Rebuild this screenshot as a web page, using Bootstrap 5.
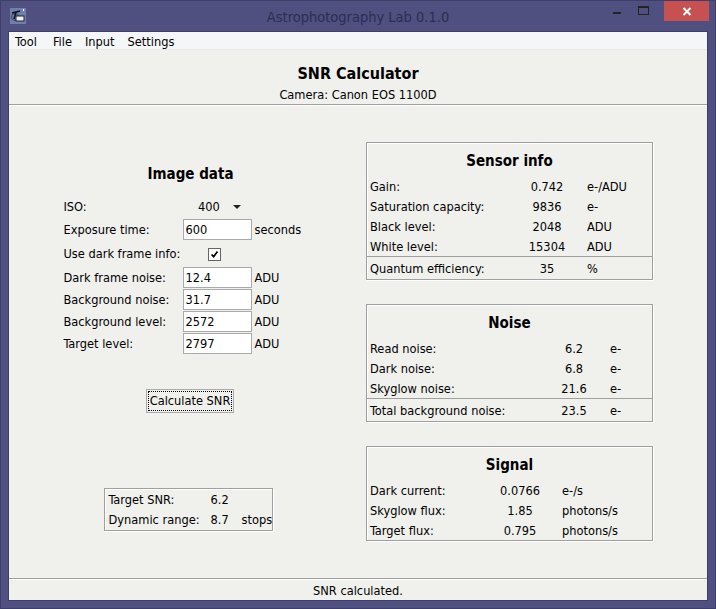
<!DOCTYPE html>
<html lang="en">
<head>
  <meta charset="UTF-8">
  <title>Astrophotography Lab 0.1.0</title>
  <link href="https://cdn.jsdelivr.net/npm/bootstrap@5.3.0/dist/css/bootstrap.min.css" rel="stylesheet">
  <style>
    html, body { height: 100%; }
    body { margin: 0; background: #4f5080; color: #000; font-family: "DejaVu Sans", sans-serif; font-stretch: condensed; font-size: 12.7px; line-height: 20px; overflow: hidden; }
    .app-frame { width: 716px; height: 609px; border: 1px solid #3d3e6a; }
    .title-bar { height: 30px; padding-left: 9px; }
    .title-text { left: 0; right: 0; top: 6px; text-align: center; color: #2d2d50; font-size: 14.5px; }
    .win-btns { right: 6px; top: 0; }
    .win-btn { width: 27px; height: 20px; }
    .win-close { width: 45px; height: 20px; background: #c75050; margin-left: 7px; }
    .app-window { margin: 0 7px; height: 570px; background: #f0f0ed; border: 1px solid #3d3e6a; }
    .menu-strip { height: 18px; background: #f5f6f7; border-bottom: 1px solid #e8e8e8; padding-left: 6px; gap: 13px; line-height: 20px; }
    .menu-strip span:first-child { margin-right: 3px; }
    .head-area { height: 55px; border-bottom: 1px solid #a0a0a0; box-shadow: 0 1px 0 #fff; }
    .head-title { font-size: 16px; font-weight: 700; line-height: 20px; margin: 14px 0 1px; }
    .left-col { width: 357px; padding: 59px 0 0 6px; }
    .form-heading { margin-bottom: 11px; }
    .form-grid { width: 254px; display: grid; grid-template-columns: 119px 69px 66px; grid-template-rows: 23px 23px 25px 22px 22px 22px 22px; align-items: center; }
    .form-grid > span { padding-top: 1px; }
    .panel-title { font-size: 15px; font-weight: 700; line-height: 20px; }
    .field-input { height: 21px; width: 69px; border: 1px solid #aaa; border-radius: 0; padding: 0 2px; font-size: 12.7px; font-stretch: condensed; line-height: 19px; color: #000; background: #fff; box-shadow: none; }
    .form-grid > .unit-text { padding-left: 3px; }
    .form-grid > .iso-select { gap: 13px; padding-left: 5px; }
    .iso-arrow { width: 0; height: 0; border-left: 4px solid transparent; border-right: 4px solid transparent; border-top: 4px solid #222; }
    .form-check-input.dark-check { width: 13px; height: 13px; margin: 0 0 0 25px; border: 1px solid #777; border-radius: 0; background-color: #fff; float: none; }
    .form-check-input.dark-check:checked { background-color: #fff; border-color: #666; background-image: url("data:image/svg+xml,%3csvg xmlns='http://www.w3.org/2000/svg' viewBox='0 0 13 13'%3e%3cpath d='M3 6.5l2.5 2.5 4.5-6' fill='none' stroke='%23000' stroke-width='2'/%3e%3c/svg%3e"); }
    .calc-btn { margin: 35px 1px 0 0; width: 88px; height: 24px; padding: 0; border: 1px solid #aaa; border-radius: 0; background: #f0f0ed; color: #000; font-size: 12.7px; font-stretch: condensed; outline: 1px dotted #000; outline-offset: -3px; }
    .result-box { margin: 75px 5px 0 0; width: 169px; height: 43px; padding: 1px 0 0 4px; display: grid; grid-template-columns: 102px 31px 30px; grid-auto-rows: 20px; }
    .group-box { border: 1px solid #a0a0a0; box-shadow: 1px 1px 0 #fff, inset 1px 1px 0 #fff; }
    .right-col { padding-top: 37px; gap: 24px; width: 288px; }
    .info-panel { width: 287px; }
    .info-head { height: 33px; line-height: 37px; text-align: center; }
    .info-row { display: grid; height: 20px; padding: 1px 0 0 3px; }
    .info-row.info-total { height: 23px; line-height: 23px; padding-top: 0; border-top: 1px solid #a0a0a0; }
    .sensor-cols { grid-template-columns: 147px 60px 1fr; }
    .sensor-cols span:last-child { padding-left: 10px; }
    .noise-cols { grid-template-columns: 180px 48px 1fr; }
    .noise-cols span:last-child { padding-left: 12px; }
    .signal-cols { grid-template-columns: 115px 70px 1fr; }
    .signal-cols span:last-child { padding-left: 7px; }
    .status-line { height: 22px; border-top: 1px solid #a0a0a0; box-shadow: inset 0 1px 0 #fff; line-height: 23px; }
  </style>
</head>
<body>
  <div class="app-frame position-relative">
    <div class="title-bar d-flex align-items-center">
      <svg width="16" height="16" viewBox="0 0 16 16">
        <rect width="16" height="16" fill="#6f7fae"/>
        <circle cx="5" cy="9" r="3.5" fill="none" stroke="#3b4468"/>
        <path d="M2 5l8-2M6 4l-2 7" stroke="#111" stroke-width="1.5"/>
        <rect x="6" y="8" width="8" height="5" fill="#eee" stroke="#222"/>
        <rect x="13" y="1" width="1" height="2" fill="#fff"/>
      </svg>
    </div>
    <div class="title-text position-absolute">Astrophotography Lab 0.1.0</div>
    <div class="win-btns position-absolute d-flex">
      <div class="win-btn d-flex align-items-center justify-content-center">
        <svg width="10" height="10" viewBox="0 0 10 10"><rect x="1" y="6" width="8" height="2" fill="#222"/></svg>
      </div>
      <div class="win-btn d-flex align-items-center justify-content-center">
        <svg width="11" height="10" viewBox="0 0 11 10"><rect x=".5" y=".5" width="10" height="8" fill="none" stroke="#222"/><rect x="0" y="0" width="11" height="2" fill="#222"/></svg>
      </div>
      <div class="win-close d-flex align-items-center justify-content-center">
        <svg width="10" height="9" viewBox="0 0 10 9"><path d="M1.5 1l7 7M8.5 1l-7 7" stroke="#fff" stroke-width="2"/></svg>
      </div>
    </div>

    <div class="app-window d-flex flex-column">
      <div class="menu-strip d-flex">
        <span>Tool</span><span>File</span><span>Input</span><span>Settings</span>
      </div>
      <div class="head-area text-center">
        <div class="head-title">SNR Calculator</div>
        <div>Camera: Canon EOS 1100D</div>
      </div>

      <div class="d-flex flex-grow-1">
        <div class="left-col d-flex flex-column align-items-center">
          <div class="panel-title form-heading">Image data</div>
          <div class="form-grid">
            <span>ISO:</span>
            <span class="iso-select d-flex align-items-center justify-content-center"><span>400</span><span class="iso-arrow"></span></span>
            <span></span>
            <span>Exposure time:</span>
            <input class="form-control field-input" value="600">
            <span class="unit-text">seconds</span>
            <span>Use dark frame info:</span>
            <span><input class="form-check-input dark-check d-block" type="checkbox" checked></span>
            <span></span>
            <span>Dark frame noise:</span>
            <input class="form-control field-input" value="12.4">
            <span class="unit-text">ADU</span>
            <span>Background noise:</span>
            <input class="form-control field-input" value="31.7">
            <span class="unit-text">ADU</span>
            <span>Background level:</span>
            <input class="form-control field-input" value="2572">
            <span class="unit-text">ADU</span>
            <span>Target level:</span>
            <input class="form-control field-input" value="2797">
            <span class="unit-text">ADU</span>
          </div>
          <button class="btn calc-btn" type="button">Calculate SNR</button>
          <div class="result-box group-box">
            <span>Target SNR:</span><span>6.2</span><span></span>
            <span>Dynamic range:</span><span>8.7</span><span>stops</span>
          </div>
        </div>

        <div class="right-col d-flex flex-column">
          <div class="info-panel group-box">
            <div class="info-head panel-title">Sensor info</div>
            <div class="info-row sensor-cols"><span>Gain:</span><span class="text-center">0.742</span><span>e-/ADU</span></div>
            <div class="info-row sensor-cols"><span>Saturation capacity:</span><span class="text-center">9836</span><span>e-</span></div>
            <div class="info-row sensor-cols"><span>Black level:</span><span class="text-center">2048</span><span>ADU</span></div>
            <div class="info-row sensor-cols"><span>White level:</span><span class="text-center">15304</span><span>ADU</span></div>
            <div class="info-row info-total sensor-cols"><span>Quantum efficiency:</span><span class="text-center">35</span><span>%</span></div>
          </div>
          <div class="info-panel group-box">
            <div class="info-head panel-title">Noise</div>
            <div class="info-row noise-cols"><span>Read noise:</span><span class="text-center">6.2</span><span>e-</span></div>
            <div class="info-row noise-cols"><span>Dark noise:</span><span class="text-center">6.8</span><span>e-</span></div>
            <div class="info-row noise-cols"><span>Skyglow noise:</span><span class="text-center">21.6</span><span>e-</span></div>
            <div class="info-row info-total noise-cols"><span>Total background noise:</span><span class="text-center">23.5</span><span>e-</span></div>
          </div>
          <div class="info-panel group-box">
            <div class="info-head panel-title">Signal</div>
            <div class="info-row signal-cols"><span>Dark current:</span><span class="text-center">0.0766</span><span>e-/s</span></div>
            <div class="info-row signal-cols"><span>Skyglow flux:</span><span class="text-center">1.85</span><span>photons/s</span></div>
            <div class="info-row signal-cols"><span>Target flux:</span><span class="text-center">0.795</span><span>photons/s</span></div>
          </div>
        </div>
      </div>

      <div class="status-line text-center">SNR calculated.</div>
    </div>
  </div>
  <script src="https://cdn.jsdelivr.net/npm/bootstrap@5.3.0/dist/js/bootstrap.bundle.min.js"></script>
</body>
</html>
